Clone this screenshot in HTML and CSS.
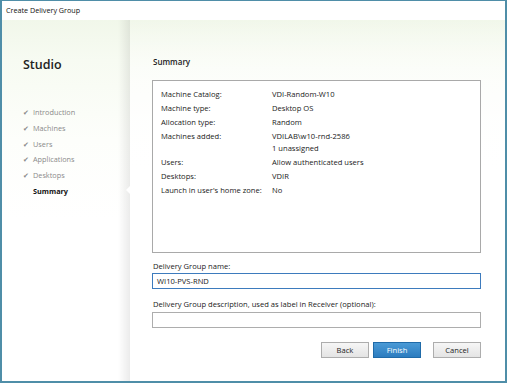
FILE: index.html
```html
<!DOCTYPE html>
<html lang="en">
<head>
  <meta charset="UTF-8" />
  <title>Create Delivery Group</title>
  <link rel="stylesheet" href="styles.css">
</head>
<body>
  <div class="window">
    <div class="titlebar">Create Delivery Group</div>
    <div class="body">
      <div class="sidebar">
        <h1>Studio</h1>
        <ul class="steps">
          <li class="done">Introduction</li>
          <li class="done">Machines</li>
          <li class="done">Users</li>
          <li class="done">Applications</li>
          <li class="done">Desktops</li>
          <li class="current">Summary</li>
        </ul>
      </div>
      <div class="main">
        <h2>Summary</h2>
        <div class="summary">
          <div class="row"><span class="key">Machine Catalog:</span><span>VDI-Random-W10</span></div>
          <div class="row"><span class="key">Machine type:</span><span>Desktop OS</span></div>
          <div class="row"><span class="key">Allocation type:</span><span>Random</span></div>
          <div class="row multi"><span class="key">Machines added:</span><span>VDILAB\w10-rnd-2586<br>1 unassigned</span></div>
          <div class="row"><span class="key">Users:</span><span>Allow authenticated users</span></div>
          <div class="row"><span class="key">Desktops:</span><span>VDIR</span></div>
          <div class="row"><span class="key">Launch in user's home zone:</span><span>No</span></div>
        </div>

        <label class="field-label">Delivery Group name:</label>
        <div class="input focused">WI10-PVS-RND</div>

        <label class="field-label second">Delivery Group description, used as label in Receiver (optional):</label>
        <div class="input"></div>

        <div class="buttons">
          <button>Back</button>
          <button class="primary">Finish</button>
          <button class="cancel">Cancel</button>
        </div>
      </div>
    </div>
  </div>
</body>
</html>
```

FILE: styles.css
```css
html, body {
  margin: 0;
  padding: 0;
}
body {
  font-family: 'Open Sans', 'Noto Sans', sans-serif;
  font-size: 7.6px;
  color: #1a1a1a;
  width: 507px;
  height: 383px;
  overflow: hidden;
}
.window {
  box-sizing: border-box;
  width: 507px;
  height: 383px;
  border: 1px solid #4f8ea8;
  border-left-width: 2px;
  border-right-width: 2px;
  border-bottom-width: 2px;
  display: flex;
  flex-direction: column;
  background: #fff;
}
.titlebar {
  height: 19px;
  line-height: 19px;
  padding-left: 4px;
  font-size: 7.2px;
  color: #111;
  background: #fff;
}
.body {
  flex: 1;
  display: flex;
  background: linear-gradient(to bottom, #f1f7ea 0px, #f7fbf2 40px, #fdfefb 120px, #fff 200px);
}
.sidebar {
  width: 128px;
  position: relative;
  background: linear-gradient(to right, rgba(255,255,255,0) 0, rgba(255,255,255,0) 116px, rgba(0,0,0,0.08) 128px);
}
.sidebar::after {
  content: "";
  position: absolute;
  right: 0;
  top: 166px;
  border-top: 4px solid transparent;
  border-bottom: 4px solid transparent;
  border-right: 4px solid #fff;
}
.sidebar h1 {
  margin: 36px 0 0 21px;
  font-size: 12.5px;
  font-weight: 600;
  color: #222;
}
.steps {
  list-style: none;
  margin: 32px 0 0 21px;
  padding: 0;
}
.steps li {
  height: 15.8px;
  line-height: 15.8px;
  font-size: 7.3px;
  color: #8a8a8a;
  padding-left: 10px;
  position: relative;
}
.steps li.done::before {
  content: "\2714";
  position: absolute;
  left: 0;
  font-size: 7px;
  color: #8a8a8a;
}
.steps li.current {
  color: #111;
  font-weight: 700;
}
.main {
  flex: 1;
  padding: 36px 24px 0 22px;
  background: linear-gradient(to bottom, rgba(255,255,255,0) 0, rgba(255,255,255,0.6) 60px, #fff 150px);
}
.main h2 {
  margin: 0 0 13px 1px;
  font-size: 8px;
  font-weight: 600;
  color: #222;
}
.summary {
  height: 165px;
  border: 1px solid #a9a9a9;
  background: #fff;
  padding: 6px 8px 0 8px;
}
.row {
  display: flex;
  line-height: 14px;
}
.row.multi {
  line-height: 12px;
  padding: 1px 0;
}
.row .key {
  width: 111px;
  flex: none;
  white-space: nowrap;
}
.field-label {
  display: block;
  margin: 7px 0 0 1px;
  line-height: 13px;
}
.field-label.second {
  margin-top: 9px;
  margin-bottom: 1px;
}
.input {
  height: 14px;
  line-height: 14px;
  border: 1px solid #adadad;
  background: #fff;
  padding: 0 4px;
}
.input.focused {
  border-color: #3d7bbd;
}
.buttons {
  display: flex;
  justify-content: flex-end;
  gap: 4px;
  margin-top: 14px;
}
.buttons button {
  width: 48px;
  height: 16px;
  padding: 0;
  font-family: inherit;
  font-size: 7.6px;
  color: #222;
  border: 1px solid #adadad;
  background: linear-gradient(to bottom, #f6f6f6, #e4e4e4);
}
.buttons button.primary {
  color: #fff;
  border-color: #1f6aa8;
  background: linear-gradient(to bottom, #4a9ad6, #2c7cbf);
}
.buttons button.cancel {
  margin-left: 8px;
}
```
